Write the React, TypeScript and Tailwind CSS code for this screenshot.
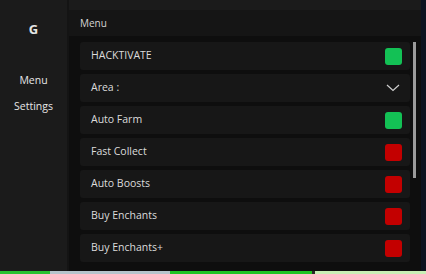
import React from "react";

const rows: { label: string; kind: "on" | "off" | "drop" }[] = [
  { label: "HACKTIVATE", kind: "on" },
  { label: "Area :", kind: "drop" },
  { label: "Auto Farm", kind: "on" },
  { label: "Fast Collect", kind: "off" },
  { label: "Auto Boosts", kind: "off" },
  { label: "Buy Enchants", kind: "off" },
  { label: "Buy Enchants+", kind: "off" },
];

export default function App() {
  return (
    <div
      className="w-[426px] h-[274px] bg-[#1b1b1b] flex flex-col overflow-hidden"
      style={{ fontFamily: '"Open Sans", "DejaVu Sans", sans-serif' }}
    >
      <div className="flex h-[271px]">
        <div className="w-[67px] flex flex-col items-center text-[#e6e6e6]">
          <div className="mt-[19px] text-[13px] font-bold leading-[20px]">G</div>
          <div className="mt-[34px] text-[10.5px] leading-[14px]">Menu</div>
          <div className="mt-[12px] text-[10.5px] leading-[14px]">Settings</div>
        </div>
        <div className="w-[2px] bg-[#141414]" />
        <div className="w-[352px] flex flex-col pt-[10px]">
          <div className="h-[26px] bg-[#151515] flex items-center pl-[11px] text-[10px] text-[#d4d4d4]">
            Menu
          </div>
          <div className="flex-1 bg-[#0e0e0e] flex pl-[11px] pt-[6px]">
            <div className="w-[330px] flex flex-col gap-[4px]">
              {rows.map((r) => (
                <div
                  key={r.label}
                  className="h-[28px] bg-[#171717] rounded-[3px] flex items-center justify-between pl-[11px] pr-[8px] text-[10.5px] text-[#dcdcdc]"
                >
                  <span>{r.label}</span>
                  {r.kind === "drop" ? (
                    <svg width="14" height="8" viewBox="0 0 14 8" className="mr-[2px]">
                      <path d="M1 1 L7 6.5 L13 1" fill="none" stroke="#cfcfcf" strokeWidth="1.2" />
                    </svg>
                  ) : (
                    <div
                      className={
                        r.kind === "on"
                          ? "w-[17px] h-[17px] rounded-[3px] bg-[#13c155]"
                          : "w-[17px] h-[17px] rounded-[3px] bg-[#c30000]"
                      }
                    />
                  )}
                </div>
              ))}
            </div>
            <div className="ml-[3px] w-[3px] h-[136px] bg-[#9a9a9a]" />
          </div>
        </div>
        <div className="flex-1 bg-[#0d1320]" />
      </div>
      <div className="h-[3px] flex">
        <div className="w-[50px] bg-[#27c12f]" />
        <div className="w-[120px] bg-[#b6c4cc]" />
        <div className="w-[142px] bg-[#1fc423]" />
        <div className="w-[3px] bg-[#2a2a2a]" />
        <div className="flex-1 bg-[#c9efb6]" />
      </div>
    </div>
  );
}
